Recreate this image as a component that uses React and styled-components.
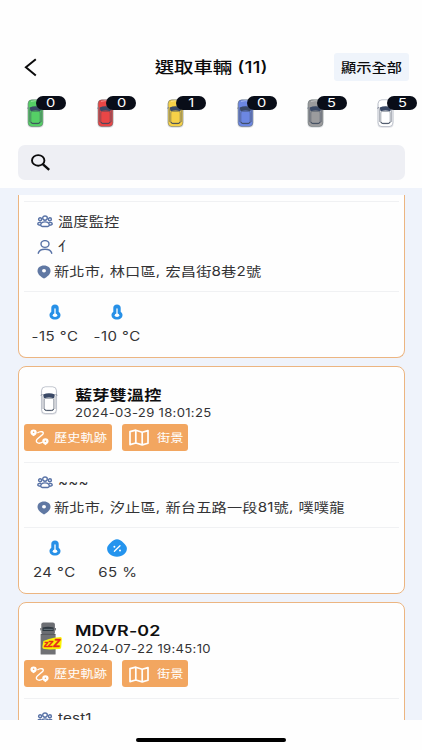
import React from 'react'
import styled, { createGlobalStyle } from 'styled-components'

const statusList = [
  { color: '#55cf66', count: 0 },
  { color: '#e94646', count: 0 },
  { color: '#f7d148', count: 1 },
  { color: '#6c87e2', count: 0 },
  { color: '#9b9b9d', count: 5 },
  { color: '#ffffff', count: 5 },
]

const vehicles = [
  {
    id: 1,
    scrolled: true,
    group: '溫度監控',
    driver: '亻',
    address: '新北市, 林口區, 宏昌街8巷2號',
    metrics: [
      { type: 'temp', value: '-15 °C' },
      { type: 'temp', value: '-10 °C' },
    ],
  },
  {
    id: 2,
    name: '藍芽雙溫控',
    nameScale: 1.21,
    time: '2024-03-29 18:01:25',
    group: '~~~',
    address: '新北市, 汐止區, 新台五路一段81號, 噗噗龍',
    metrics: [
      { type: 'temp', value: '24 °C' },
      { type: 'humidity', value: '65 %' },
    ],
  },
  {
    id: 3,
    name: 'MDVR-02',
    nameScale: 1.26,
    time: '2024-07-22 19:45:10',
    sleeping: true,
    group: 'test1',
    metrics: [],
  },
]

function CarIcon({ color, width = 17, height = 29 }) {
  const white = color === '#ffffff'
  return (
    <svg width={width} height={height} viewBox="0 0 17 29">
      <rect x="0.4" y="1.5" width="16.2" height="27.3" rx="4" fill="#8a8fa0" opacity="0.2" />
      <rect x="1.1" y="0.8" width="14.8" height="26.8" rx="3.8" fill={color} stroke={white ? '#8e94a6' : '#5f6a6c'} strokeWidth="0.9" strokeOpacity="0.6" />
      <path d="M4 2.4Q8.5 0.9 13 2.4" fill="none" stroke="#ffffff" strokeOpacity="0.5" strokeWidth="0.8" />
      <path d="M2.6 8.6Q8.5 5.9 14.4 8.6L13.4 12.2Q8.5 11 3.6 12.2Z" fill="#3a4966" />
      <path d="M2.5 9.5V23M14.5 9.5V23" stroke="#4b5468" strokeWidth="0.8" strokeOpacity="0.55" />
      <rect x="3.8" y="12.4" width="9.4" height="11.8" rx="1.4" fill={color} stroke="#3d4a5c" strokeWidth="0.7" strokeOpacity="0.7" />
      <path d="M3.9 22.8Q4 24.4 6 24.6H11Q13 24.4 13.1 22.8" fill="none" stroke="#3d4a5c" strokeWidth="0.9" />
      <path d="M0.2 9.3L2 8.5M16.8 9.3L15 8.5" stroke="#777f90" strokeWidth="0.9" />
    </svg>
  )
}

function SleepingTruckIcon() {
  return (
    <svg width="24" height="34" viewBox="0 0 24 34">
      <rect x="1.3" y="0.5" width="13.6" height="12" rx="2" fill="#6c6e73" />
      <rect x="0.6" y="12" width="15" height="20.6" rx="0.6" fill="#707175" />
      <path d="M2.6 5.5Q8 3.8 13.6 5.5V9H2.6Z" fill="#303a42" />
      <path d="M3.6 7.4H12.8" stroke="#68757d" strokeWidth="1" />
      <path d="M0.8 6V8.4M15.4 6V8.4" stroke="#55575c" strokeWidth="0.9" />
      <path d="M1 12.4H15.4" stroke="#4a4c50" strokeWidth="0.7" />
      <path d="M3.4 19L9 17L14 15.8L20.6 15Q22.2 15.4 21.8 17.4L21.2 25.4Q20.8 27.2 19 27L10 27.6L4.4 27Q2 26.6 2.4 24.2Z" fill="#fbf204" />
      <g fontFamily="Liberation Sans, sans-serif" fontStyle="italic" fontWeight="700" fill="#e62a1c" stroke="#e62a1c" strokeWidth="0.4">
        <text x="4" y="25.4" fontSize="8.5">z</text>
        <text x="7.8" y="25" fontSize="8.5">Z</text>
        <text x="13.4" y="24.6" fontSize="11">Z</text>
      </g>
    </svg>
  )
}

function GroupIcon() {
  return (
    <svg width="16" height="13" viewBox="0 0 16 13" fill="none" stroke="#5872a6" strokeWidth="1.4">
      <ellipse cx="8" cy="3.1" rx="2.3" ry="2.1" />
      <circle cx="3.1" cy="4.3" r="1.5" />
      <circle cx="12.9" cy="4.3" r="1.5" />
      <path d="M3.7 10.1C3.7 8 5.5 6.9 8 6.9S12.3 8 12.3 10.1C12.3 11.8 10 11.5 8 11.5S3.7 11.8 3.7 10.1Z" />
      <path d="M4 7.4C2 7.1 0.8 8 0.8 9.1C0.8 10 1.8 10.2 3.6 10.2M12 7.4C14 7.1 15.2 8 15.2 9.1C15.2 10 14.2 10.2 12.4 10.2" />
    </svg>
  )
}

function PersonIcon() {
  return (
    <svg width="16" height="14" viewBox="0 0 16 14" fill="none" stroke="#5872a6" strokeWidth="1.4" strokeLinecap="round">
      <ellipse cx="8" cy="4" rx="4" ry="3.4" />
      <path d="M1.2 13.2C2 10.6 4.6 9.3 8 9.3S14 10.6 14.8 13.2" />
    </svg>
  )
}

function PinIcon() {
  return (
    <svg width="14" height="14" viewBox="0 0 14 14">
      <path d="M7 0.4C10.9 0.4 13.5 2.7 13.5 5.9C13.5 9.2 10 11.7 7 13.6C4 11.7 0.5 9.2 0.5 5.9C0.5 2.7 3.1 0.4 7 0.4Z" fill="#6078a3" />
      <ellipse cx="7" cy="5.7" rx="2" ry="1.8" fill="#ffffff" />
    </svg>
  )
}

function TempIcon() {
  return (
    <svg width="12" height="16" viewBox="0 0 12 16">
      <path d="M6 0.4C8.3 0.4 9.7 1.8 9.7 3.7V7.7C10.8 8.6 11.5 9.7 11.5 11C11.5 13.8 9 15.6 6 15.6S0.5 13.8 0.5 11C0.5 9.7 1.2 8.6 2.3 7.7V3.7C2.3 1.8 3.7 0.4 6 0.4Z" fill="#2790e7" />
      <path d="M6 5V11" stroke="#ffffff" strokeWidth="1.3" strokeLinecap="round" />
      <ellipse cx="6" cy="11.2" rx="2.3" ry="1.8" fill="#ffffff" />
    </svg>
  )
}

function HumidityIcon() {
  return (
    <svg width="20" height="18" viewBox="0 0 20 18">
      <path d="M10 0.3C12.3 0.3 14.3 1.8 16.4 3.8C18.6 5.8 19.9 7.6 19.9 9.6C19.9 14.2 15.8 17.8 10 17.8S0.1 14.2 0.1 9.6C0.1 7.6 1.4 5.8 3.6 3.8C5.7 1.8 7.7 0.3 10 0.3Z" fill="#2494ee" />
      <path d="M13 6.7L7.4 12.2" stroke="#ffffff" strokeWidth="1.3" strokeLinecap="round" />
      <circle cx="7.4" cy="7.8" r="1" fill="#ffffff" />
      <circle cx="13" cy="11.4" r="1" fill="#ffffff" />
    </svg>
  )
}

function TrackIcon() {
  return (
    <svg width="20" height="17" viewBox="0 0 20 17">
      <path d="M7.4 4C10.4 1.6 15 2.6 12.6 5.6L7.6 9.8C4.4 12.8 7.8 15.6 12.6 13.2" fill="none" stroke="#ffffff" strokeWidth="1.4" />
      <path d="M3.6 0.4A3.2 3 0 0 1 6.8 3.4C6.8 5.2 5 6.1 3.6 7.3C2.2 6.1 0.4 5.2 0.4 3.4A3.2 3 0 0 1 3.6 0.4Z" fill="#ffffff" />
      <path d="M15.4 9.3A3.2 3 0 0 1 18.6 12.3C18.6 14.1 16.8 15.1 15.4 16.3C14 15.1 12.2 14.1 12.2 12.3A3.2 3 0 0 1 15.4 9.3Z" fill="#ffffff" />
      <circle cx="3.6" cy="3.3" r="0.8" fill="#f2a660" />
      <circle cx="15.4" cy="12.3" r="0.8" fill="#f2a660" />
    </svg>
  )
}

function MapIcon() {
  return (
    <svg width="20" height="17" viewBox="0 0 20 17" fill="none" stroke="#ffffff" strokeWidth="1.7" strokeLinejoin="round">
      <path d="M1 2.6L6.8 1.2L13.2 3.2L19 1.6V14.2L13.2 15.9L6.8 14L1 15.6Z" />
      <path d="M6.8 1.2V14M13.2 3.2V15.9" />
    </svg>
  )
}

function VehicleCard({ vehicle }) {
  return (
    <Card $scrolled={vehicle.scrolled}>
      {!vehicle.scrolled && (
        <>
          <CardHead>
            <Thumb>
              {vehicle.sleeping ? <SleepingTruckIcon /> : <CarIcon color="#ffffff" width={18} height={29} />}
            </Thumb>
            <Names>
              <Name $scale={vehicle.nameScale}>{vehicle.name}</Name>
              <Time>{vehicle.time}</Time>
            </Names>
          </CardHead>
          <Actions>
            <ActionButton $width={88}>
              <TrackIcon />
              <ActionLabel>歷史軌跡</ActionLabel>
            </ActionButton>
            <ActionButton $width={66} $wide>
              <MapIcon />
              <ActionLabel>街景</ActionLabel>
            </ActionButton>
          </Actions>
        </>
      )}
      <Info>
        <InfoRow>
          <GroupIcon />
          <InfoText>{vehicle.group}</InfoText>
        </InfoRow>
        {vehicle.driver && (
          <InfoRow>
            <PersonIcon />
            <InfoText>{vehicle.driver}</InfoText>
          </InfoRow>
        )}
        {vehicle.address && (
          <InfoRow $tight>
            <PinIcon />
            <InfoText>{vehicle.address}</InfoText>
          </InfoRow>
        )}
      </Info>
      <Metrics>
        {vehicle.metrics.map((m, i) => (
          <Metric key={i}>
            <MetricIcon>{m.type === 'temp' ? <TempIcon /> : <HumidityIcon />}</MetricIcon>
            <MetricValue>{m.value}</MetricValue>
          </Metric>
        ))}
      </Metrics>
    </Card>
  )
}

export default function App() {
  return (
    <Screen>
      <GlobalStyle />
      <Header>
        <BackButton>
          <svg width="13" height="19" viewBox="0 0 13 19" fill="none" stroke="#0b0b0c" strokeWidth="2">
            <path d="M11.8 1.2L1.9 9.3L11.8 17.4" />
          </svg>
        </BackButton>
        <Title>選取車輛 (11)</Title>
        <ShowAll>
          <ShowAllLabel>顯示全部</ShowAllLabel>
        </ShowAll>
      </Header>
      <StatusBar>
        {statusList.map((s) => (
          <Status key={s.color}>
            <CarIcon color={s.color} />
            <Badge>
              <BadgeText $scale={1.3}>{s.count}</BadgeText>
            </Badge>
          </Status>
        ))}
      </StatusBar>
      <SearchBox>
        <svg width="20" height="17" viewBox="0 0 20 17" fill="none" stroke="#0b0b0c">
          <ellipse cx="7.2" cy="6.4" rx="6.2" ry="5.3" strokeWidth="1.9" />
          <path d="M12 10.4L18.2 15.8" strokeWidth="2.4" />
        </svg>
      </SearchBox>
      <ListArea>
        <List>
          {vehicles.map((v) => (
            <VehicleCard key={v.id} vehicle={v} />
          ))}
        </List>
      </ListArea>
      <Footer>
        <HomeBar />
      </Footer>
    </Screen>
  )
}

const GlobalStyle = createGlobalStyle`
  * {
    box-sizing: border-box;
  }
  body {
    margin: 0;
    background: #fefefe;
  }
  svg {
    display: block;
    flex-shrink: 0;
  }
`

const Screen = styled.div`
  width: 422px;
  height: 750px;
  display: flex;
  flex-direction: column;
  overflow: hidden;
  background: #fefefe;
  color: #333335;
  font-family: Inter, 'Noto Sans CJK TC', sans-serif;
`

const WideText = styled.span`
  display: block;
  white-space: nowrap;
  transform: scaleX(${(p) => p.$scale || 1.17});
  transform-origin: left center;
`

const Header = styled.header`
  display: grid;
  grid-template-columns: 1fr auto 1fr;
  align-items: center;
  height: 28px;
  margin-top: 53px;
  padding: 0 13px 0 24px;
`

const BackButton = styled.button`
  justify-self: start;
  padding: 0;
  border: 0;
  background: none;
`

const Title = styled.h1`
  margin: 1px 0 -1px -11px;
  font-size: 15.5px;
  line-height: 28px;
  font-weight: 500;
  color: #0b0b0c;
  white-space: nowrap;
  transform: scaleX(1.25);
`

const ShowAll = styled.button`
  justify-self: end;
  width: 75px;
  height: 28px;
  padding: 0 0 0 7px;
  border: 0;
  border-radius: 3px;
  background: #eff4fb;
  color: #0b0b0c;
  font-family: inherit;
  text-align: left;
`

const ShowAllLabel = styled(WideText)`
  width: max-content;
  font-size: 13px;
  line-height: 28px;
  font-weight: 500;
`

const StatusBar = styled.div`
  display: flex;
  height: 35px;
  margin-top: 14px;
  padding-left: 26.5px;
`

const Status = styled.div`
  position: relative;
  flex: 0 0 70.2px;
  padding-top: 4px;
`

const Badge = styled.span`
  position: absolute;
  left: 9.5px;
  top: 0.5px;
  display: flex;
  justify-content: center;
  width: 30px;
  height: 14.5px;
  border-radius: 8px;
  background: #090d18;
  color: #ffffff;
`

const BadgeText = styled(WideText)`
  font-size: 11.3px;
  line-height: 15.5px;
  transform-origin: center;
`

const SearchBox = styled.div`
  display: flex;
  align-items: center;
  height: 35px;
  margin: 15px 17.5px 0;
  padding-left: 13.5px;
  border-radius: 7px;
  background: #eeeff4;
`

const ListArea = styled.main`
  height: 532px;
  margin-top: 7.5px;
  padding: 7.5px 17.5px 0;
  background: #eff3fb;
`

const List = styled.div`
  display: flex;
  flex-direction: column;
  gap: 7.5px;
  height: 100%;
  overflow: hidden;
`

const Card = styled.section`
  flex-shrink: 0;
  height: ${(p) => (p.$scrolled ? 163.3 : 228.7)}px;
  padding: ${(p) => (p.$scrolled ? '6.4px' : '19.4px')} 5px 0;
  border: 1.3px solid #ecb581;
  border-top-width: ${(p) => (p.$scrolled ? 0 : '1.3px')};
  border-radius: ${(p) => (p.$scrolled ? '0 0 8px 8px' : '8px')};
  background: #fefefe;
`

const CardHead = styled.div`
  display: flex;
  height: 38px;
`

const Thumb = styled.div`
  width: 51.6px;
  padding-left: 16px;
`

const Names = styled.div`
  display: flex;
  flex-direction: column;
`

const Name = styled(WideText)`
  font-size: 14.2px;
  line-height: 18px;
  font-weight: 600;
  letter-spacing: 0.1px;
  color: #0f0f10;
`

const Time = styled(WideText)`
  font-size: 11.2px;
  line-height: 18px;
  letter-spacing: 0.26px;
`

const Actions = styled.div`
  display: flex;
  gap: 10.5px;
`

const ActionButton = styled.button`
  display: flex;
  align-items: center;
  gap: ${(p) => (p.$wide ? 7.5 : 4.5)}px;
  width: ${(p) => p.$width}px;
  height: 26.5px;
  padding: 1px 0 0 ${(p) => (p.$wide ? 7 : 6)}px;
  border: 0;
  border-radius: 3px;
  background: #f2a660;
  color: #ffffff;
  font-family: inherit;
`

const ActionLabel = styled(WideText)`
  font-size: 11.3px;
  line-height: 26px;
`

const Info = styled.div`
  margin-top: 11.6px;
  padding: 7px 0 7px 13px;
  border-top: 1px solid #f0f1f3;
  border-bottom: 1px solid #f0f1f3;

  ${Card} > &:first-child {
    margin-top: 0;
  }
`

const InfoRow = styled.div`
  display: flex;
  align-items: center;
  gap: ${(p) => (p.$tight ? 3.3 : 5)}px;
  height: 25px;
`

const InfoText = styled(WideText)`
  font-size: 13px;
  line-height: 25px;
  letter-spacing: 0.14px;
  word-spacing: 0.5px;
`

const Metrics = styled.div`
  display: flex;
`

const Metric = styled.div`
  display: flex;
  flex-direction: column;
  align-items: center;
  width: 62.5px;
  padding-top: 8px;
`

const MetricIcon = styled.div`
  display: flex;
  align-items: center;
  height: 24px;
`

const MetricValue = styled(WideText)`
  font-size: 12.8px;
  line-height: 26px;
  letter-spacing: 0.4px;
  transform-origin: center;
`

const Footer = styled.footer`
  display: flex;
  justify-content: center;
  padding-top: 18px;
`

const HomeBar = styled.div`
  width: 150px;
  height: 4.5px;
  border-radius: 3px;
  background: #000000;
`
